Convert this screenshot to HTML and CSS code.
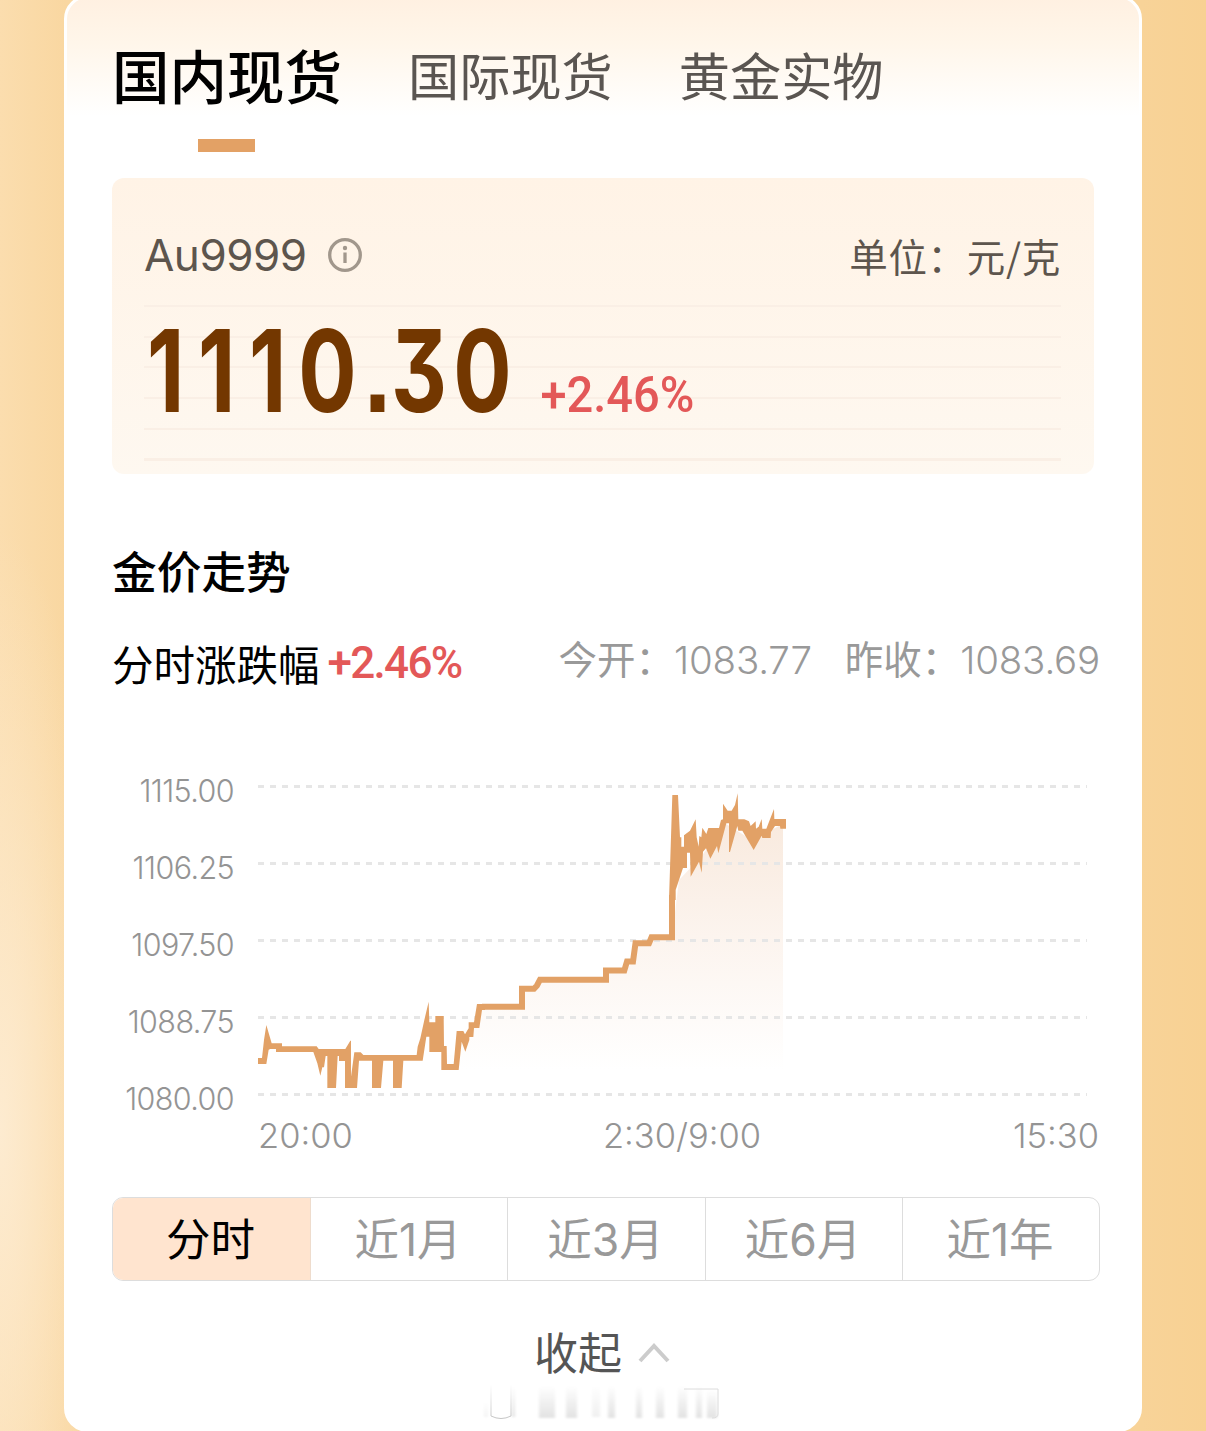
FILE: index.html
```
<!DOCTYPE html>
<html lang="zh-CN">
<head>
    <meta charset="UTF-8">
    <meta name="viewport" content="width=device-width, initial-scale=1.0">
    <title>金价走势</title>
    <link rel="stylesheet" href="styles.css">
</head>
<body>
    <main class="card">
        <nav class="tabs">
            <a class="tab active">国内现货</a>
            <a class="tab">国际现货</a>
            <a class="tab">黄金实物</a>
        </nav>

        <section class="quote">
            <div class="quote-head">
                <span class="symbol">Au9999</span>
                <svg class="info" width="36" height="36" viewBox="0 0 36 36">
                    <circle cx="18" cy="18" r="15.3" />
                    <path d="M18 15.5v10.5" />
                    <circle class="dot" cx="18" cy="11" r="2.2" />
                </svg>
                <span class="unit">单位：元/克</span>
            </div>
            <div class="quote-body">
                <svg class="price" width="380" height="172" viewBox="145 285 380 172">
                    <text class="price-value" transform="translate(145 412) scale(.76 1)" x="4 71 138 203 288 325 407" y="0">1110.30</text>
                </svg>
                <svg class="price" width="180" height="172" viewBox="525 285 180 172">
                    <text class="price-change" transform="translate(541.5 411.5) scale(.94 1)" x="0" y="0">+2.46%</text>
                </svg>
            </div>
        </section>

        <h2>金价走势</h2>

        <div class="summary">
            <span class="label">分时涨跌幅</span>
            <span class="change">+2.46%</span>
            <span class="open">今开：<b>1083.77</b></span>
            <span class="close">昨收：<b>1083.69</b></span>
        </div>

        <svg class="chart" width="988" height="400" viewBox="112 760 988 400">
            <defs>
                <linearGradient id="area" gradientUnits="userSpaceOnUse" x1="0" y1="800" x2="0" y2="1070">
                    <stop offset="0" stop-color="#f8e8db" />
                    <stop offset="0.5" stop-color="#fcf4ee" />
                    <stop offset="1" stop-color="#fff" />
                </linearGradient>
            </defs>

            <path fill="url(#area)" d="M440 1075V1055H458L480 1007H522V989H537L541 980H606V970H625L634 961V943H650V937H672L679 880L700 858L726 824L752 840L783 824V1075Z" />

            <g class="grid">
                <path d="M258 786.5H1087" />
                <path d="M258 863.5H1087" />
                <path d="M258 940.5H1087" />
                <path d="M258 1017.5H1087" />
                <path d="M258 1094.5H1087" />
            </g>

            <!-- night session -->
            <path class="line-fill" transform="translate(240 980) scale(.33333)" d="M54 234H66L72 180L79 135L95 190H126V199H230L236 207H316L331 182H333V290L343 217H362L370 225H530L533 200L541 175L553 120L566 65L568 127H586V108H611L612 198H620L621 252H641L650 153H670L675 163L686 145V127H702L711 72H735V90H726L718 144H702L700 171H688V180L676 215L665 185L656 270H604V216H568V170H559L548 242H490L485 324H459V242H430L423 324H396V242H357L351 324H315V243H297V228H293L288 324H262V228H257L252 262H247L241 287L232 250L220 216H108V207H91L86 209L79 252H54Z" />
            <path class="line" d="M482 1006.8H522V988.7H534L537 985.5L540 979.7H606V970.5H624.3L627 961.5H633L635.5 943.3H649L651.5 937.3H672V895" />
            <!-- day session -->
            <path class="line-fill" transform="translate(655 780) scale(.33333)" d="M42 360L52 45H69L75 172H79V200H87V166L105 152L122 118L125 172L131 200L133 168L139 172L142 143L154 162L160 144H192L198 120L204 118V71L218 92H230L240 75L248 40L250 118H268L282 124L287 138L302 124L303 146L311 140L320 117L322 146H334L345 118L357 87L358 117H393V146H376L375 138H360L348 156L347 174H322L320 167L296 210L262 152H250L247 138L225 216H222V130H214L190 220L186 198L166 236L153 205L144 215L140 278L132 245L107 290L105 218H96V264H84L62 330V360Z" />

            <g class="y-axis">
                <text x="234" y="802">1115.00</text>
                <text x="234" y="879">1106.25</text>
                <text x="234" y="956">1097.50</text>
                <text x="234" y="1033">1088.75</text>
                <text x="234" y="1110">1080.00</text>
            </g>
            <g class="x-axis">
                <text x="258" y="1148">20:00</text>
                <text x="682" y="1148" text-anchor="middle">2:30/9:00</text>
                <text x="1099" y="1148" text-anchor="end">15:30</text>
            </g>
        </svg>

        <div class="periods">
            <button type="button" class="selected">分时</button>
            <button type="button">近1月</button>
            <button type="button">近3月</button>
            <button type="button">近6月</button>
            <button type="button">近1年</button>
        </div>

        <div class="collapse">
            <span>收起</span>
            <svg width="32" height="20" viewBox="0 0 32 20"><path d="M2 18L16 3L30 18" /></svg>
        </div>

        <svg class="shade" width="240" height="36" viewBox="481 1384 240 36">
            <defs>
                <linearGradient id="fade" x1="0" y1="0" x2="0" y2="1">
                    <stop offset="0" stop-color="#fff" />
                    <stop offset="1" stop-color="#e2e2e2" />
                </linearGradient>
                <linearGradient id="edge" gradientUnits="userSpaceOnUse" x1="0" y1="1384" x2="0" y2="1419">
                    <stop offset="0" stop-color="#fff" />
                    <stop offset="1" stop-color="#c4c4c4" />
                </linearGradient>
                <filter id="soft"><feGaussianBlur stdDeviation="1.5 0.8" /></filter>
            </defs>
            <g fill="url(#fade)" filter="url(#soft)">
                <rect x="484" y="1402" width="4" height="15" opacity="0.4" />
                <rect x="512" y="1386" width="3" height="31" />
                <rect x="539" y="1386" width="16" height="32" />
                <rect x="566" y="1386" width="11" height="32" />
                <rect x="592" y="1386" width="8" height="31" opacity="0.5" />
                <rect x="608" y="1386" width="7" height="32" />
                <rect x="636" y="1386" width="6" height="32" />
                <rect x="656" y="1386" width="8" height="32" />
                <rect x="678" y="1386" width="9" height="32" />
                <rect x="696" y="1386" width="6" height="32" />
                <rect x="707" y="1390" width="10" height="28" />
            </g>
            <path d="M491 1385V1416Q501 1421 511 1416V1385" fill="none" stroke="url(#edge)" />
            <path d="M684 1389H718V1414Q718 1418 712 1418" fill="none" stroke="#dcdcdc" />
        </svg>
    </main>
</body>
</html>
```
FILE: styles.css
```
* {
    box-sizing: border-box;
}

body {
    margin: 0;
    height: 1431px;
    overflow: hidden;
    font-family: Inter, "Noto Sans CJK SC", sans-serif;
    background: radial-gradient(ellipse 110px 600px at 0 1130px, #fdebd0, transparent),
        linear-gradient(to right, #fbddae, #f9d7a1 65px, #f8d398 1142px, #f8d193);
}

.card {
    width: 1078px;
    height: 1437px;
    margin: -5px 0 0 64px;
    padding: 0 39px 0 45px;
    border: 3px solid #fff;
    border-radius: 24px;
    background: linear-gradient(#fff0e1, #fff6ea 45px, #fff 118px);
    display: flex;
    flex-direction: column;
}

.tabs {
    display: flex;
    gap: 66px;
    height: 154px;
}

.tab {
    position: relative;
    height: 154px;
    line-height: 158px;
    font-size: 51.2px;
    color: #5a5551;
}

.tab.active {
    line-height: 161px;
    font-size: 57.5px;
    font-weight: 500;
    color: #000;
}

.tab.active::after {
    content: "";
    position: absolute;
    left: 86px;
    bottom: 0;
    width: 57px;
    height: 13px;
    background: #e3a165;
}

.quote {
    width: 982px;
    height: 296px;
    margin-top: 26px;
    padding: 47px 33px 0 32px;
    border-radius: 12px;
    background: linear-gradient(#fff3e6, #fef8f0);
}

.quote-head {
    display: flex;
    align-items: center;
    height: 60px;
    color: #5d554d;
}

.symbol {
    font-size: 44px;
    letter-spacing: -0.5px;
}

.info {
    margin-left: 20px;
    fill: none;
    stroke: #a1978c;
    stroke-width: 3.3;
}

.info .dot {
    fill: #a1978c;
    stroke: none;
}

.unit {
    margin-left: auto;
    font-family: "Noto Sans CJK SC", sans-serif;
    font-size: 38.5px;
    letter-spacing: 0.7px;
}

/* ruled lines behind the price */
.quote-body {
    display: flex;
    align-items: flex-start;
    height: 156px;
    margin-top: 20px;
    background: repeating-linear-gradient(#faefe5 0 2px, transparent 2px 30.7px);
}

.price {
    display: block;
    flex: none;
    margin-top: -20px;
}

.price-value {
    font-size: 114px;
    font-weight: 650;
    font-feature-settings: "cv09", "ss07";
    fill: #733700;
}

.price-change {
    font-family: Roboto, sans-serif;
    font-size: 50px;
    font-weight: 500;
    fill: #e35858;
}

h2 {
    margin: 67px 0 0;
    font-size: 44.7px;
    line-height: 64px;
    font-weight: 500;
}

.summary {
    display: flex;
    align-items: center;
    height: 60px;
    margin-top: 28px;
    white-space: nowrap;
}

.label {
    font-size: 41.5px;
}

.change {
    margin-left: 8px;
    font-family: Roboto, sans-serif;
    font-size: 44px;
    font-weight: 500;
    letter-spacing: -1.7px;
    color: #e35858;
}

.open,
.close {
    padding-bottom: 13px;
    font-size: 38.5px;
    color: #999;
}

.open {
    margin-left: auto;
}

.close {
    margin-left: 33px;
}

.summary b {
    font-weight: 300;
    letter-spacing: -0.2px;
}

.chart {
    display: block;
    margin-top: 67px;
    flex: none;
}

.grid path {
    fill: none;
    stroke: #e6e6e6;
    stroke-width: 3;
    stroke-dasharray: 6 6;
}

.line {
    fill: none;
    stroke: #e2a166;
    stroke-width: 6;
}

.line-fill {
    fill: #e2a166;
}

.y-axis {
    font-size: 30.5px;
    font-weight: 300;
    text-anchor: end;
    letter-spacing: -0.6px;
    fill: #949494;
}

.x-axis {
    font-size: 34.5px;
    font-weight: 300;
    fill: #949494;
}

.periods {
    display: grid;
    grid-template-columns: 198px 197px 198px 197px 1fr;
    height: 84px;
    margin-top: 37px;
    border: 1.5px solid #ddd;
    border-radius: 11px;
    overflow: hidden;
    flex: none;
}

.periods button {
    padding: 0 2px 6px 0;
    border: 0;
    border-right: 1.5px solid #ddd;
    background: none;
    font: 44.5px Inter, "Noto Sans CJK SC", sans-serif;
    color: #999;
}

.periods button:last-child {
    border-right: 0;
}

.periods .selected {
    background: #ffe4cf;
    border-color: #eedccd;
    color: #000;
}

.collapse {
    display: flex;
    align-items: center;
    justify-content: center;
    gap: 16px;
    height: 60px;
    margin-top: 42px;
    padding-right: 8px;
    font-size: 44px;
    color: #555;
}

.collapse span {
    padding-bottom: 5px;
}

.collapse path {
    fill: none;
    stroke: #ccc;
    stroke-width: 4;
}

.shade {
    margin: 1px 0 0 369px;
}
```
